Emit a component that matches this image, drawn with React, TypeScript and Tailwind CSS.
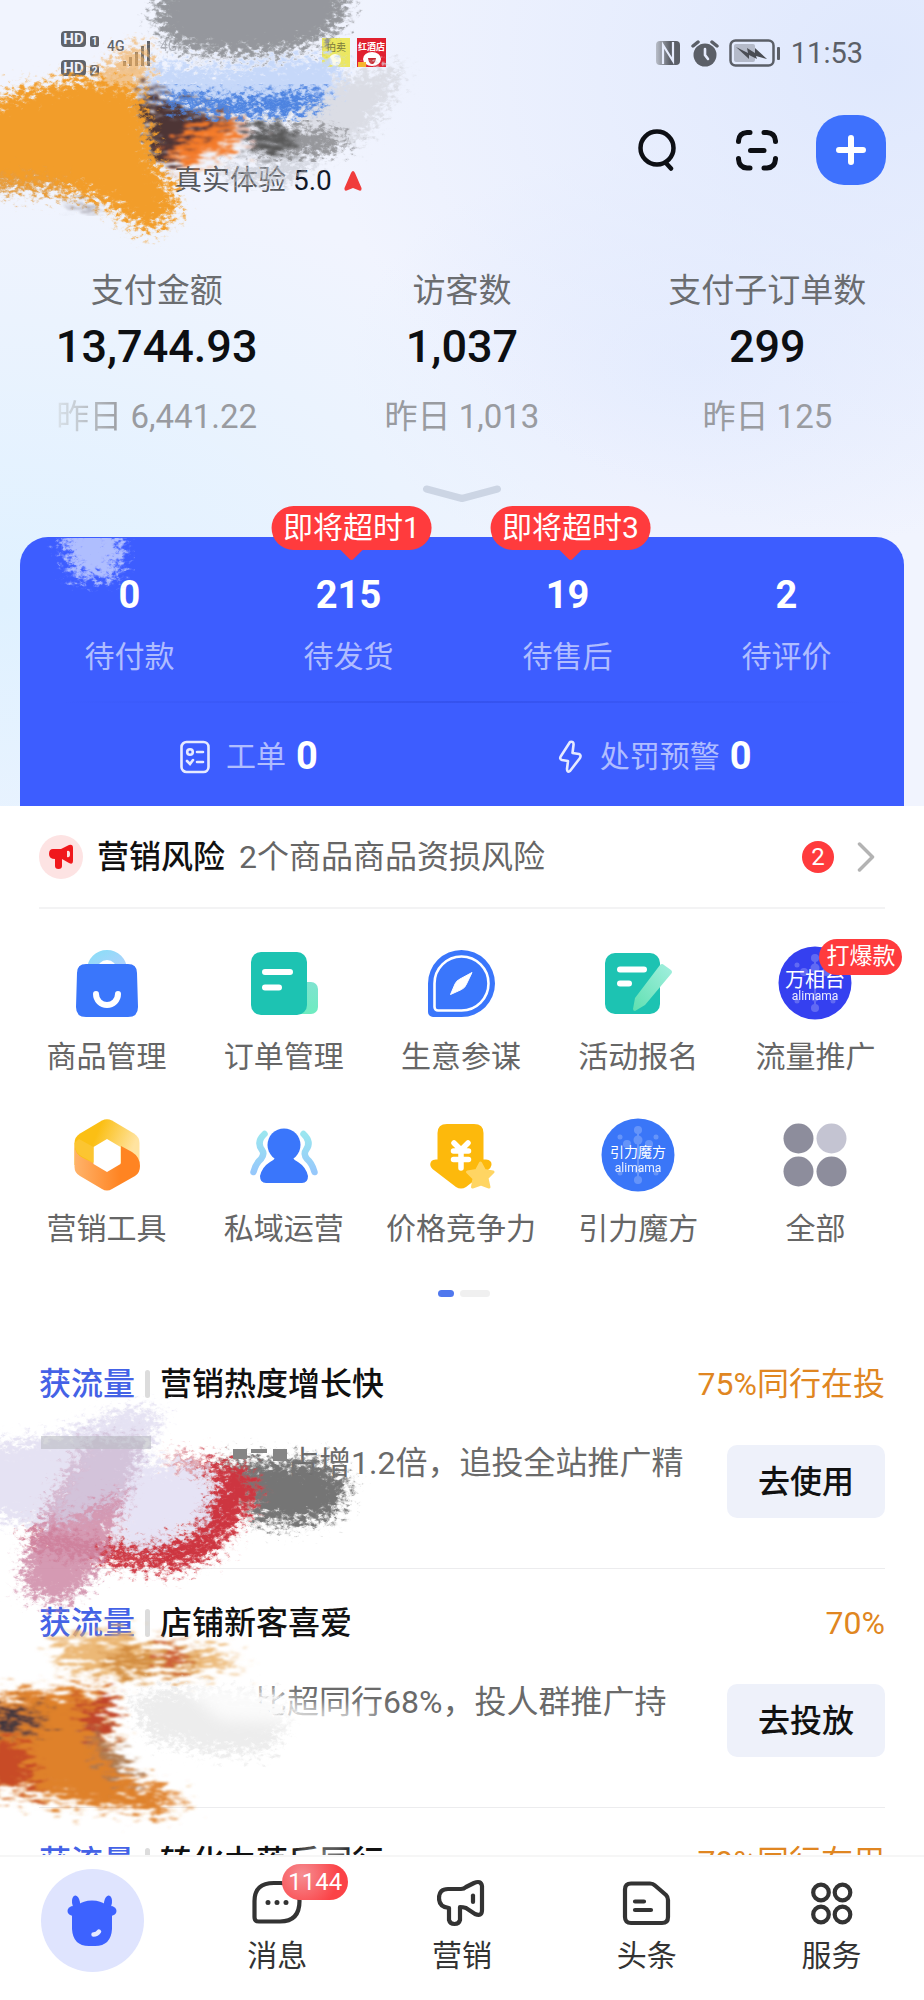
import type { ReactNode } from 'react';

const stats = [
  { label: '支付金额', value: '13,744.93', prev: '6,441.22', faded: true },
  { label: '访客数', value: '1,037', prev: '1,013' },
  { label: '支付子订单数', value: '299', prev: '125' },
];

const orders = [
  { label: '待付款', value: 0 },
  { label: '待发货', value: 215, tip: '即将超时1' },
  { label: '待售后', value: 19, tip: '即将超时3' },
  { label: '待评价', value: 2 },
];

interface Promo {
  title: string;
  rate: string;
  desc?: string;
  descPad?: string;
  action?: string;
}

const promos: Promo[] = [
  { title: '营销热度增长快', rate: '75%同行在投', desc: '占增1.2倍，追投全站推广精', descPad: 'pl-[248px]', action: '去使用' },
  { title: '店铺新客喜爱', rate: '70%', desc: '比超同行68%，投人群推广持', descPad: 'pl-[216px]', action: '去投放' },
  { title: '转化力落后同行', rate: '79%同行在用' },
];

/* --- Ícones do menu --- */

function BagIcon() {
  return (
    <svg viewBox="0 0 76 76" className="size-[76px]">
      <defs>
        <linearGradient id="bag" x1="0" y1="0" x2="1" y2="1">
          <stop offset="0" stopColor="#8edcf8" />
          <stop offset="1" stopColor="#b3d0fd" />
        </linearGradient>
      </defs>
      <path d="M23 25a15 15 0 0 1 30 0" fill="none" stroke="url(#bag)" strokeWidth="10" />
      <path d="M17 19H59Q68 19 68 28L69 62Q69 72 59 72H17Q7 72 7 62L8 28Q8 19 17 19Z" fill="#3a76fb" />
      <path d="M27 49a11 11 0 0 0 22 0" fill="none" stroke="#fff" strokeWidth="6" strokeLinecap="round" />
    </svg>
  );
}

function OrderIcon() {
  return (
    <svg viewBox="0 0 76 76" className="size-[76px]">
      <defs>
        <linearGradient id="ord" x1="0" y1="0" x2="0" y2="1">
          <stop offset="0" stopColor="#7fe3d0" />
          <stop offset="1" stopColor="#6eecc0" />
        </linearGradient>
      </defs>
      <rect x="44" y="37" width="28" height="32" rx="7" fill="url(#ord)" />
      <rect x="5" y="7" width="56" height="63" rx="10" fill="#1dc3b2" />
      <path d="M19 27H44M19 42.500H33" stroke="#fff" strokeWidth="6" strokeLinecap="round" />
    </svg>
  );
}

function CompassIcon() {
  return (
    <svg viewBox="0 0 76 76" className="size-[76px]">
      <path d="M5 38.500a33.500 33.500 0 1 1 33.500 33.500H10a5 5 0 0 1-5-5Z" fill="#3a76fb" />
      <path d="M11.500 38.500a27 27 0 1 1 27 27H15a3.500 3.500 0 0 1-3.500-3.500Z" fill="none" stroke="#fff" strokeWidth="2.600" />
      <path d="M27.500 49.500L32 39Q33 36 37 34L49 27.500L43.500 39Q42 43 38.500 44.500Z" fill="#fff" stroke="#fff" strokeLinejoin="round" />
    </svg>
  );
}

function SignupIcon() {
  return (
    <svg viewBox="0 0 76 76" className="size-[76px]">
      <defs>
        <linearGradient id="pen" x1="1" y1="0" x2="0" y2="1">
          <stop offset="0" stopColor="#a3efdf" />
          <stop offset="1" stopColor="#5fe0b0" />
        </linearGradient>
      </defs>
      <rect x="5" y="8" width="55" height="61" rx="10" fill="#1dc3b2" />
      <path d="M20 24.500H44M20 38.500H29" stroke="#fff" strokeWidth="6" strokeLinecap="round" />
      <path d="M33 64L35 53L60 20Q62 18 64 20L71 25Q73 27 71 29L45 60L35 66Q33 66 33 64Z" fill="url(#pen)" />
    </svg>
  );
}

function AlimamaIcon({ name, color, size }: { name: string; color: string; size: number }) {
  return (
    <svg viewBox="0 0 76 76" className="size-[76px]">
      <circle cx="38" cy="38" r="36.500" fill={color} />
      <g fill="#fff" opacity="0.22">
        <circle cx="38" cy="13" r="4" />
        <circle cx="38" cy="23" r="4.500" />
        <circle cx="38" cy="53" r="3.500" />
        <circle cx="38" cy="63" r="4" />
        <circle cx="20" cy="20" r="2.500" />
        <circle cx="56" cy="20" r="2.500" />
        <circle cx="27" cy="27" r="4" />
        <circle cx="49" cy="27" r="4" />
        <circle cx="20" cy="56" r="2.500" />
        <circle cx="56" cy="56" r="2.500" />
        <path d="M37 13H39V63H37Z" />
      </g>
      <text x="38" y={size > 16 ? 42 : 40} fontSize={size} textAnchor="middle" fill="#fff">{name}</text>
      <text x="38" y="55" fontSize="12" textAnchor="middle" fill="#fff" opacity="0.9">alimama</text>
    </svg>
  );
}

function HexIcon() {
  return (
    <svg viewBox="0 0 76 76" className="size-[76px]">
      <defs>
        <linearGradient id="hexTop" x1="0" y1="0" x2="1" y2="0.3">
          <stop offset="0.4" stopColor="#fbbf14" />
          <stop offset="1" stopColor="#ffe3a0" />
        </linearGradient>
        <linearGradient id="hexBottom" x1="0" y1="0" x2="1" y2="0">
          <stop offset="0" stopColor="#ffb36b" />
          <stop offset="0.7" stopColor="#ff8422" />
        </linearGradient>
      </defs>
      <path d="M33 3.500Q38 1 43 3.500L65 16.500Q70.500 20 70.500 26V48H5.500V26Q5.500 20 11 16.500Z" fill="url(#hexTop)" />
      <path d="M5.500 27Q5.500 37 14 41L38 53L52 46V29L63 35Q71 40 71 49Q71 56 66 59L43 72Q38 75 33 72L11 59Q5.500 56 5.500 50Z" fill="url(#hexBottom)" />
      <path d="M38 22L51.500 30V47L38 55L24.500 47V30Z" fill="#fff" />
      <path d="M5.500 26Q5.500 36 14 40L24.500 45.500V30L10 22Z" fill="#fcc531" />
    </svg>
  );
}

function UsersIcon() {
  return (
    <svg viewBox="0 0 76 76" className="size-[76px]">
      <defs>
        <linearGradient id="wave" x1="0" y1="0" x2="0" y2="1">
          <stop offset="0" stopColor="#9be6f0" />
          <stop offset="1" stopColor="#96c8fb" />
        </linearGradient>
      </defs>
      <g fill="none" stroke="url(#wave)" strokeWidth="6.500" strokeLinecap="round" strokeLinejoin="round">
        <path d="M18.500 17Q10 25 16 33Q19 37 15 42Q10 46 7.500 55" />
        <path d="M57.500 17Q66 25 60 33Q57 37 61 42Q66 46 68.500 55" />
      </g>
      <circle cx="38" cy="28" r="16.500" fill="#3a76fb" />
      <path d="M30 40H46Q48 43 52 45Q60 50 62 59Q62 66 56 66H20Q14 66 14 59Q16 50 24 45Q28 43 30 40Z" fill="#3a76fb" />
    </svg>
  );
}

function PriceIcon() {
  return (
    <svg viewBox="0 0 76 76" className="size-[76px]">
      <path
        d="M24 7H51Q60.500 7 60.500 16V42.500H63Q69 43 68.500 48Q68 51 65 53L43 70Q38 73 33 70L9.500 52Q5.500 48 8.500 44Q10 42 14.500 42.500V16Q14.500 7 24 7Z"
        fill="#fdb90c"
      />
      <path d="M31 26L38 33L45 26M30.500 34H45.500M30.500 42.500H45.500M38 34V51" fill="none" stroke="#fff" strokeWidth="5.500" strokeLinecap="round" strokeLinejoin="round" />
      <path d="M57.500 46L61.500 53.500L70 55L64 61L66 70L58 67L49.500 70L51 61.500L44.500 55L53.500 53.500Z" fill="#ffd563" stroke="#ffd563" strokeWidth="3" strokeLinejoin="round" />
    </svg>
  );
}

function AllIcon() {
  return (
    <svg viewBox="0 0 76 76" className="size-[76px]" fill="#8d8d9c">
      <circle cx="21.500" cy="21.500" r="15" />
      <circle cx="54.500" cy="21.500" r="15" fill="#c4c4d2" />
      <circle cx="21.500" cy="54.500" r="15" />
      <circle cx="54.500" cy="54.500" r="15" />
    </svg>
  );
}

const tools: { label: string; icon: ReactNode; badge?: string }[] = [
  { label: '商品管理', icon: <BagIcon /> },
  { label: '订单管理', icon: <OrderIcon /> },
  { label: '生意参谋', icon: <CompassIcon /> },
  { label: '活动报名', icon: <SignupIcon /> },
  { label: '流量推广', icon: <AlimamaIcon name="万相台" color="#3540f0" size={20} />, badge: '打爆款' },
  { label: '营销工具', icon: <HexIcon /> },
  { label: '私域运营', icon: <UsersIcon /> },
  { label: '价格竞争力', icon: <PriceIcon /> },
  { label: '引力魔方', icon: <AlimamaIcon name="引力魔方" color="#3a76f8" size={14} /> },
  { label: '全部', icon: <AllIcon /> },
];

/* --- Ícones da barra inferior --- */

const navItems: { label: string; icon: ReactNode; badge?: string }[] = [
  {
    label: '消息',
    badge: '1144',
    icon: (
      <>
        <path d="M2.500 22Q2.500 4 22 4H28Q47.500 4 47.500 22Q47.500 42.500 28 42.500H7Q2.500 42.500 2.500 38Z" />
        <path d="M16 23.500V23.600M25 23.500V23.600M34 23.500V23.600" strokeWidth="5" />
      </>
    ),
  },
  {
    label: '营销',
    icon: (
      <>
        <path d="M11 10H24Q27 10 29 8L37 4Q44 1 45 7V31Q45 38 38 35L29 29Q26 28 23 28V41Q22 45 17.500 45Q13 45 12 41V29Q2 28 2 19Q2 10 11 10Z" />
        <path d="M36 16.500V23" />
      </>
    ),
  },
  {
    label: '头条',
    icon: (
      <>
        <path d="M9 4.500H28Q31 4.500 33 6.500L44 16Q46 18 46 21V38Q46 44 40 44H9Q3 44 3 38V10.500Q3 4.500 9 4.500Z" />
        <path d="M13 22.500H22M13 31H29" />
      </>
    ),
  },
  {
    label: '服务',
    icon: (
      <>
        <circle cx="14" cy="13.500" r="7.800" />
        <circle cx="35.500" cy="13.500" r="7.800" />
        <circle cx="14" cy="35.500" r="7.800" />
        <circle cx="35.500" cy="35.500" r="7.800" />
      </>
    ),
  },
];

function StatusBar() {
  return (
    <div className="flex h-[105px] items-center justify-between pr-[61px] pl-[60px] text-[#5b5f67]">
      <svg viewBox="0 0 330 60" className="h-[60px] w-[330px]" fill="#5f636b">
        <rect x="1" y="8" width="25" height="16" rx="4" />
        <text x="13.500" y="21" fontSize="15" fontWeight="700" textAnchor="middle" fill="#eef2ff">HD</text>
        <rect x="30" y="13" width="9" height="11" rx="2" />
        <text x="34.500" y="22" fontSize="10" fontWeight="700" textAnchor="middle" fill="#eef2ff">1</text>
        <rect x="1" y="37" width="25" height="16" rx="4" />
        <text x="13.500" y="50" fontSize="15" fontWeight="700" textAnchor="middle" fill="#eef2ff">HD</text>
        <rect x="30" y="42" width="9" height="11" rx="2" />
        <text x="34.500" y="51" fontSize="10" fontWeight="700" textAnchor="middle" fill="#eef2ff">2</text>
        <text x="47" y="28" fontSize="14" fontWeight="500">4G</text>
        <path d="M63 38h3v5h-3zM69 34h3v9h-3zM75 29h3v14h-3zM81 23h3v20h-3zM87 18h3v25h-3z" />
        <text x="100" y="28" fontSize="14" opacity="0.4">4G</text>
        <rect x="262" y="15" width="28" height="29" fill="#ece75f" />
        <text x="276" y="28" fontSize="10" textAnchor="middle" fill="#7b7a3a">拍卖</text>
        <circle cx="275" cy="37" r="6" fill="#fdfce8" />
        <rect x="297" y="15" width="29" height="29" fill="#e0202f" />
        <text x="311.500" y="27" fontSize="9" fontWeight="700" textAnchor="middle" fill="#fff">红酒店</text>
        <ellipse cx="312" cy="36" rx="9" ry="7" fill="#fff" />
        <path d="M298 39h8v5h-8z" fill="#f7b52c" />
        <path d="M308 35h8q-1 6-4 6t-4-6z" fill="#c4252c" />
      </svg>
      <div className="flex items-center gap-[10px]">
        <svg viewBox="0 0 26 26" className="size-[26px]">
          <defs>
            <linearGradient id="nfc">
              <stop offset="0" stopColor="#b9bec9" />
              <stop offset="0.6" stopColor="#5b5f67" />
            </linearGradient>
          </defs>
          <rect x="1" y="1" width="24" height="24" rx="4" fill="url(#nfc)" />
          <path d="M8 24V5L18 21V2" fill="none" stroke="#e6ecfd" strokeWidth="2.200" />
        </svg>
        <svg viewBox="0 0 28 28" className="size-7" fill="#5b5f67">
          <circle cx="14" cy="16" r="11.500" />
          <path d="M2 7L7 3M26 7L21 3" stroke="#5b5f67" strokeWidth="3.500" strokeLinecap="round" />
          <path d="M14 10V16L17 20" fill="none" stroke="#e6ecfd" strokeWidth="2.600" strokeLinecap="round" />
        </svg>
        <svg viewBox="0 0 52 28" className="h-7 w-[52px]">
          <rect x="1.500" y="1.500" width="43" height="25" rx="5" fill="none" stroke="#5b5f67" strokeWidth="2.500" />
          <rect x="5" y="5" width="21" height="18" rx="2" fill="#b4bac9" />
          <path d="M7 8L19 14L18 9L26 14L26 9L38 20L27 17L28 20L20 16L20 20Z" fill="#4a4d54" />
          <rect x="48" y="8" width="3" height="13" rx="1" fill="#5b5f67" />
        </svg>
        <span className="text-[29px] leading-8">11:53</span>
      </div>
    </div>
  );
}

function ShopHeader() {
  return (
    <div className="flex h-[90px] items-center pr-[38px] pl-[174px]">
      <div className="flex flex-1 items-center gap-3 self-end text-[28px] leading-7 text-gray-900">
        <p>
          <span className="text-[#55575c]">真实体验</span> 5.0
        </p>
        <svg viewBox="0 0 18 20" className="h-5 w-[18px]">
          <path d="M9 0Q10 0 11 2L17.500 17Q18 21 14 19L9 17L4 19Q0 21 .500 17L7 2Q8 0 9 0Z" fill="#f03c3c" />
        </svg>
      </div>
      <button type="button" aria-label="搜索" className="mr-[58px]">
        <svg viewBox="0 0 42 42" className="size-[42px]" fill="none" stroke="#0d0f14" strokeWidth="4.500" strokeLinecap="round">
          <circle cx="21" cy="19" r="16.500" />
          <path d="M30 34L35 39.500" />
        </svg>
      </button>
      <button type="button" aria-label="扫一扫" className="mr-[38px]">
        <svg viewBox="0 0 42 42" className="size-[42px]" fill="none" stroke="#0d0f14" strokeWidth="5" strokeLinecap="round">
          <path d="M2.500 12.500V12Q3 4 11 3.500H14M28 3.500H31Q39 4 39.500 12V12.500M39.500 29.500V30Q39 38.500 31 39H28M14 39H11Q3 38.500 2.500 30V29.500M14.500 21.500H28" />
        </svg>
      </button>
      <button type="button" aria-label="添加" className="flex size-[70px] items-center justify-center rounded-[28px] bg-[#3e71fd]">
        <svg viewBox="0 0 30 30" className="size-[30px]" stroke="#fff" strokeWidth="6" strokeLinecap="round">
          <path d="M15 3V27M3 15H27" />
        </svg>
      </button>
    </div>
  );
}

function OrderPanel() {
  return (
    <section className="mx-5 mt-[34px] rounded-t-[28px] bg-[#3d5dff] pt-[36px] text-white">
      <div className="grid grid-cols-4 pr-2">
        {orders.map(o => (
          <div key={o.label} className="relative flex flex-col items-center">
            <span className="text-[38px] leading-[44px] font-bold">{o.value}</span>
            <span className="mt-5 text-[30px] leading-10 text-white/60">{o.label}</span>
            {o.tip && (
              <div className="absolute -top-[67px] left-1/2 ml-[3px] -translate-x-1/2">
                <div className="rounded-full bg-[#ff3b3d] px-3 text-[30px] leading-[44px] whitespace-nowrap">{o.tip}</div>
                <svg viewBox="0 0 24 12" className="mx-auto -mt-px h-3 w-6">
                  <path d="M0 0H24L14 10Q12 12 10 10Z" fill="#ff3b3d" />
                </svg>
              </div>
            )}
          </div>
        ))}
      </div>
      <div className="mx-10 mt-6 h-[2px] bg-linear-to-r from-transparent via-[#3552ee] to-transparent" />
      <div className="flex h-[103px] items-center gap-60 pt-1 pl-40">
        <div className="flex items-center">
          <svg viewBox="0 0 30 34" className="mr-4 h-[34px] w-[30px]" fill="none" stroke="#e6eaff" strokeWidth="2.600" strokeLinecap="round">
            <rect x="1.500" y="2" width="27" height="30" rx="5" />
            <circle cx="10" cy="12" r="2.800" />
            <path d="M17 12H23M17 22H23M7 21L10 24L13 20" />
          </svg>
          <span className="text-[30px] text-white/60">工单</span>
          <span className="ml-[10px] text-[38px] font-bold">0</span>
        </div>
        <div className="flex items-center">
          <svg viewBox="0 0 24 34" className="mr-[18px] h-[34px] w-6" fill="none" stroke="#e6eaff" strokeWidth="2.600" strokeLinejoin="round">
            <path d="M12 2Q16 1 15.500 5L14.500 13L21 14Q23.500 15 22 18L12 31Q9 33 9 29L10 21L4 20Q1 19 3 16Z" />
          </svg>
          <span className="text-[30px] text-white/60">处罚预警</span>
          <span className="ml-[10px] text-[38px] font-bold">0</span>
        </div>
      </div>
    </section>
  );
}

function RiskRow() {
  return (
    <a href="#risk" className="mx-[39px] flex h-[103px] items-center border-b-2 border-[#f3f3f4] text-[32px]">
      <span className="flex size-11 items-center justify-center rounded-full bg-[#fde3e3]">
        <svg viewBox="0 0 26 26" className="size-[26px]" fill="#f0181c">
          <path d="M5 5H13L21 1Q25 0 25 4V17Q25 21 21 19L14 15V22Q14 25 10.500 25Q7 25 7 22V15Q1 15 1 10Q1 5 5 5Z" />
          <path d="M19 7Q22 6 22 10Q22 14 19 13Z" fill="#fde3e3" />
        </svg>
      </span>
      <span className="ml-[14px] font-medium text-[#111]">营销风险</span>
      <span className="ml-[14px] text-[#666]">2个商品商品资损风险</span>
      <span className="mr-[23px] ml-auto flex size-8 items-center justify-center rounded-full bg-[#ff3b3d] text-2xl text-white">2</span>
      <svg viewBox="0 0 18 30" className="mr-[10px] h-[30px] w-[18px]" fill="none" stroke="#b3b3b3" strokeWidth="3.500" strokeLinecap="round" strokeLinejoin="round">
        <path d="M2.500 2L15.500 15L2.500 28" />
      </svg>
    </a>
  );
}

function PromoItem({ item }: { item: Promo }) {
  return (
    <article className="border-b border-[#ececee] pt-[34px] pb-[50px] text-[32px]">
      <header className="flex items-center leading-10">
        <span className="font-medium text-[#4462e6]">获流量</span>
        <span className="mx-[10px] h-7 w-[5px] rounded-full bg-[#dcdcdc]" />
        <h3 className="font-medium text-[#111]">{item.title}</h3>
        <span className="ml-auto text-[#e08621]">{item.rate}</span>
      </header>
      {item.action && (
        <div className="mt-[41px] flex items-start justify-between">
          <p className={`leading-9 whitespace-nowrap text-[#6a6a6a] ${item.descPad}`}>{item.desc}</p>
          <button type="button" className="h-[73px] w-[158px] shrink-0 rounded-[10px] bg-[#eef1fa] font-medium text-[#111]">
            {item.action}
          </button>
        </div>
      )}
    </article>
  );
}

/* Pinceladas decorativas sobre a página */
function Paint() {
  return (
    <svg viewBox="0 0 924 2000" className="pointer-events-none absolute top-0 left-0 w-full" aria-hidden="true">
      <defs>
        <filter id="dry" x="-20%" y="-20%" width="140%" height="140%">
          <feGaussianBlur in="SourceGraphic" stdDeviation="5" result="b" />
          <feTurbulence type="fractalNoise" baseFrequency="0.16 0.22" numOctaves="4" seed="4" result="n" />
          <feDisplacementMap in="b" in2="n" scale="44" xChannelSelector="R" yChannelSelector="G" />
          <feGaussianBlur stdDeviation="0.7" />
        </filter>
        <filter id="streak" x="-20%" y="-20%" width="140%" height="140%">
          <feGaussianBlur in="SourceGraphic" stdDeviation="4" result="b" />
          <feTurbulence type="fractalNoise" baseFrequency="0.06 0.22" numOctaves="4" seed="9" result="n" />
          <feDisplacementMap in="b" in2="n" scale="56" xChannelSelector="R" yChannelSelector="B" />
          <feGaussianBlur stdDeviation="0.8" />
        </filter>
        <filter id="soft" x="-20%" y="-20%" width="140%" height="140%">
          <feGaussianBlur stdDeviation="7" />
        </filter>
        <clipPath id="panel">
          <path d="M20 538H904V700H20Z" />
        </clipPath>
      </defs>

      {/* topo */}
      <path d="M158 -30H335L348 14L326 40L280 54L225 56L180 50L156 28Z" fill="#8c8e93" opacity="0.9" filter="url(#dry)" />
      <path d="M292 122L338 78L405 66L392 95L365 136L325 149L290 150Z" fill="#d9dbe3" opacity="0.9" filter="url(#dry)" />
      <path d="M330 150L290 160L215 168L240 184L292 180Z" fill="#bfc2cb" opacity="0.6" filter="url(#dry)" />
      <path d="M252 126L330 130L352 144L318 156L256 154Z" fill="#96979b" filter="url(#dry)" />
      <path d="M150 64L220 68L290 60L336 58L340 72L330 98L150 94Z" fill="#c6d8f9" filter="url(#dry)" />
      <path d="M90 78L120 54L145 42L150 70L140 90Z" fill="#f2b061" opacity="0.7" filter="url(#dry)" />
      <g filter="url(#streak)">
        <path d="M138 84L165 100L240 120L225 134L190 162L148 164Z" fill="#4e3434" />
        <path d="M182 134L234 122L246 136L222 154L172 168Z" fill="#f47c2a" />
        <path d="M248 126H288L294 150H250Z" fill="#565757" />
      </g>
      <path d="M156 92L240 97L324 90L322 104L290 116L232 116L174 108Z" fill="#4c82e0" filter="url(#dry)" />
      <g filter="url(#dry)">
        <path d="M-30 108L30 88L80 78L134 84L146 115L154 158L172 186L178 208L164 226L140 230L120 214L96 200L50 188L-30 186Z" fill="#f29d2b" />
        <path d="M-30 178L50 182L84 196L50 192L-30 192Z" fill="#dc9a45" opacity="0.8" />
      </g>
      <path d="M66 198L84 202L98 208L98 213L74 209Z" fill="#85808a" opacity="0.8" filter="url(#streak)" />

      {/* painel azul */}
      <g clipPath="url(#panel)">
        <path d="M58 524H122L120 568L112 580L74 576Z" fill="#c4cffe" opacity="0.85" filter="url(#dry)" />
      </g>

      {/* primeiro cartão */}
      <g filter="url(#dry)">
        <path d="M-30 1448L60 1436L120 1410L164 1410L146 1450L130 1510L50 1528L-30 1512Z" fill="#e5e2f3" />
        <path d="M218 1460L325 1462L350 1484L336 1514L300 1525L250 1520L256 1490Z" fill="#757575" />
        <path d="M162 1456L238 1465L262 1488L238 1524L212 1556L176 1570L110 1564L32 1548L28 1530L140 1548L190 1535L220 1482Z" fill="#cd3441" />
        <path d="M88 1440H142L126 1498L108 1545L88 1582L66 1605L24 1594L24 1552L48 1508Z" fill="#cf8ca8" opacity="0.88" />
        <path d="M90 1438H144L126 1490L70 1520L50 1518Z" fill="#d3c3da" />
        <path d="M136 1464L198 1466L216 1488L202 1524L150 1548L114 1542Z" fill="#e6e3f5" />
      </g>
      <path d="M41 1436H151V1449H41Z" fill="#b9bbc2" opacity="0.6" />
      <path d="M233 1449h14v10h-14zM273 1449h14v12h-14zM251 1449h16v4h-16z" fill="#858585" />

      {/* segundo cartão */}
      <g filter="url(#streak)">
        <path d="M56 1640L128 1632L140 1644L222 1652L240 1664L190 1674L100 1676L60 1660Z" fill="#eab067" opacity="0.9" />
        <path d="M100 1656L190 1650L200 1668L110 1672Z" fill="#d28a3a" />
        <path d="M158 1650L188 1652L182 1666L162 1666Z" fill="#cb4f30" />
        <path d="M20 1692L96 1688L112 1698L112 1744L130 1776L186 1802L166 1812L90 1806L-30 1784V1706Z" fill="#df8129" />
        <path d="M76 1704L114 1696L106 1742L92 1738Z" fill="#c1452c" />
        <path d="M86 1726L106 1736L136 1782L110 1774Z" fill="#94735a" opacity="0.7" />
        <path d="M-30 1740L24 1742L40 1792L-30 1780Z" fill="#c84b26" />
        <path d="M-30 1706L44 1712L38 1730L-30 1730Z" fill="#3b353c" />
      </g>
      <path d="M130 1698L170 1688L270 1696L290 1716L268 1752L220 1754L150 1738Z" fill="#ededed" filter="url(#dry)" />
      <path d="M180 1684L270 1688L310 1706L390 1712L350 1726L220 1720Z" fill="#fff" opacity="0.75" filter="url(#soft)" />
      <path d="M300 1848H346V1862H300Z" fill="#fff" opacity="0.6" filter="url(#soft)" />
    </svg>
  );
}

export default function App() {
  return (
    <div className="relative flex h-screen flex-col overflow-hidden bg-white font-['Roboto','Noto_Sans_CJK_SC',sans-serif]">
      <main className="min-h-0 flex-1 overflow-hidden">
        {/* --- TOPO --- */}
        <div className="bg-[radial-gradient(ellipse_at_0%_75%,#dff1ff_0%,transparent_50%),radial-gradient(ellipse_at_95%_8%,#dfe8fd_0%,transparent_45%),radial-gradient(ellipse_at_75%_45%,#e6edfe_0%,transparent_35%)] bg-[#f1f4fe]">
          <StatusBar />
          <ShopHeader />

          <section className="grid grid-cols-3 px-1 pt-[76px] text-center">
            {stats.map(s => (
              <div key={s.label}>
                <p className="text-[33px] leading-10 text-[#6b6d70]">{s.label}</p>
                <p className="mt-2 text-[45px] leading-[56px] font-medium text-[#0d0f12]">{s.value}</p>
                <p className="mt-[22px] text-[33px] leading-10 text-[#999ba0]">
                  <span className={s.faded ? 'bg-linear-to-r from-[#dbe4ec] to-[#999ba0] bg-clip-text text-transparent' : ''}>昨日</span> {s.prev}
                </p>
              </div>
            ))}
          </section>

          <button type="button" aria-label="展开" className="mx-auto mt-12 block">
            <svg viewBox="0 0 80 18" className="h-[18px] w-20" fill="none" stroke="#ccd5e4" strokeWidth="7" strokeLinecap="round" strokeLinejoin="round">
              <path d="M4.500 4L40 13.500L75.500 4" />
            </svg>
          </button>

          <OrderPanel />
        </div>

        <RiskRow />

        {/* --- FERRAMENTAS --- */}
        <nav className="grid grid-cols-5 gap-y-10 pt-9 pr-5 pl-[18px]">
          {tools.map(t => (
            <a key={t.label} href="#tools" className="relative flex flex-col items-center">
              {t.icon}
              <span className="mt-4 text-[30px] leading-10 whitespace-nowrap text-[#666]">{t.label}</span>
              {t.badge && (
                <span className="absolute -top-[6px] left-1/2 ml-1 rounded-full bg-[#ff3b3d] px-[7px] text-[23px] leading-9 whitespace-nowrap text-white">
                  {t.badge}
                </span>
              )}
            </a>
          ))}
        </nav>
        <div className="mt-[41px] mb-[33px] flex justify-center gap-[6px] pl-1">
          <span className="h-[7px] w-4 rounded-full bg-[#5078ee]" />
          <span className="h-[7px] w-[30px] rounded-full bg-[#f0f0f0]" />
        </div>

        {/* --- LISTA --- */}
        <section className="mx-[39px]">
          {promos.map(p => (
            <PromoItem key={p.title} item={p} />
          ))}
        </section>
      </main>

      <Paint />

      {/* --- BARRA INFERIOR --- */}
      <nav className="relative grid h-[145px] shrink-0 grid-cols-5 border-t-2 border-[#f6f6f6] bg-white">
        <a href="#home" aria-label="首页" className="mt-3 flex size-[103px] items-center justify-center justify-self-center rounded-full bg-[#dfe4fe]">
          <svg viewBox="0 0 50 52" className="h-[52px] w-[50px]" fill="#3d62ff">
            <ellipse cx="9" cy="7.500" rx="4" ry="7" transform="rotate(-8 9 7.500)" />
            <ellipse cx="41" cy="7.500" rx="4" ry="7" transform="rotate(8 41 7.500)" />
            <ellipse cx="6.500" cy="16" rx="6" ry="5" />
            <ellipse cx="43.500" cy="16" rx="6" ry="5" />
            <path d="M11 10Q16 5.500 25 5.500T39 10Q43 13 45 18V34Q44 51 28 51H22Q6 51 5 34V18Q7 13 11 10Z" />
            <path d="M26.500 39.500Q30 39.500 32 36.500" fill="none" stroke="#e6eaff" strokeWidth="4.500" strokeLinecap="round" />
          </svg>
        </a>
        {navItems.map(n => (
          <a key={n.label} href="#nav" className="relative flex flex-col items-center pt-[22px]">
            <svg viewBox="0 0 50 48" className="h-12 w-[50px]" fill="none" stroke="#333" strokeWidth="4.200" strokeLinecap="round" strokeLinejoin="round">
              {n.icon}
            </svg>
            <span className="mt-[9px] text-[30px] leading-10 text-[#333]">{n.label}</span>
            {n.badge && (
              <span className="absolute top-[7px] left-1/2 ml-[5px] rounded-full bg-[radial-gradient(circle_at_30%_30%,#f58d92,#fb4347_70%)] px-[6px] text-2xl leading-9 text-white">
                {n.badge}
              </span>
            )}
          </a>
        ))}
      </nav>
    </div>
  );
}
